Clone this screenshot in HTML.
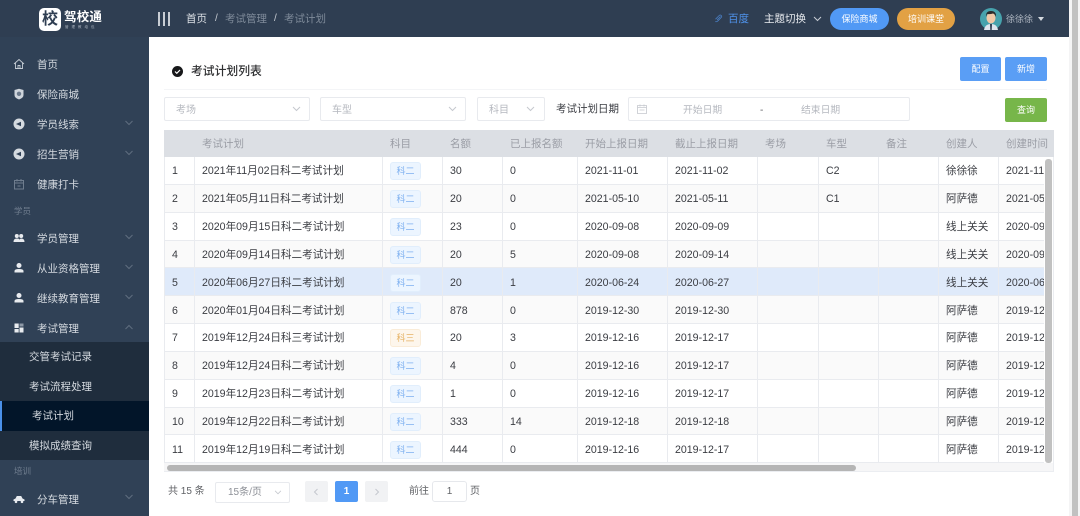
<!DOCTYPE html>
<html><head><meta charset="utf-8">
<style>
*{box-sizing:border-box;margin:0;padding:0}
html,body{width:1080px;height:516px;overflow:hidden;background:#fff;font-family:"Liberation Sans","Noto Sans CJK SC",sans-serif;font-size:10px;color:#303133}
.a{position:absolute;white-space:nowrap}
#top{position:absolute;left:0;top:0;width:1069px;height:37px;background:#2f3e52}
#side{position:absolute;left:0;top:37px;width:149px;height:479px;background:#304156}
.mi{position:absolute;left:37px;color:#d5dae0;font-size:10.5px;line-height:14px;white-space:nowrap;transform:translateY(-6px)}
.ic{position:absolute;left:13px;width:12px;height:12px;transform:translateY(-50%)}
.ch{position:absolute;left:125px;width:8px;height:5px;transform:translateY(-50%)}
.sub{position:absolute;left:0;width:149px;height:29.5px;background:#1f2d3d;color:#d5dae0;font-size:10.5px;line-height:31px;padding-left:29px}
.grp{position:absolute;left:14px;color:#6f7d8e;font-size:8.5px;line-height:12px;transform:translateY(-50%)}
.sel{position:absolute;top:97px;height:24px;border:1px solid #e8eaee;border-radius:2px;background:#fff}
.sel svg{position:absolute;top:8px}
.ph{position:absolute;top:104px;font-size:10px;line-height:13px;color:#b5b8bf;white-space:nowrap}
.btn{position:absolute;border-radius:2px;color:#fff;font-size:9px;text-align:center}
#tw{position:absolute;left:164px;top:130px;width:890px;height:342px;overflow:hidden;border-bottom:1px solid #ebedf1}
table{position:absolute;left:0;top:0;border-collapse:separate;border-spacing:0;table-layout:fixed;width:895px}
th{height:27px;background:#dcdfe4;color:#9a9da5;font-weight:normal;font-size:10.5px;line-height:14px;text-align:left;padding-left:7px;white-space:nowrap;overflow:hidden}
th:first-child{padding-left:8px}
td{height:27.85px;font-size:10.6px;line-height:14px;color:#3a3c42;padding:2px 0 0 7px;border-bottom:1px solid #e9ebef;border-right:1px solid #e9ebef;white-space:nowrap;overflow:hidden;background:#fff;vertical-align:middle}
td:first-child{border-left:1px solid #e9ebef}
tr.z td{background:#fafafa}
tr.h td{background:#dfeafa}
.t{display:block;width:31px;height:18px;line-height:16px;text-align:center;font-size:9px;border-radius:3px;background:#ecf5ff;border:1px solid #e1eefc;color:#7fb1f0}
.t.o{background:#fdf6ec;border-color:#faecd8;color:#e6b366}
#mask{position:absolute;left:1044px;top:157px;width:10px;height:315px;background:#fff}
</style></head><body>
<div id="top"></div>
<div id="side"></div>

<!-- logo -->
<div class="a" style="left:39px;top:8px;width:22px;height:23px;background:#fff;border-radius:5px;color:#2f3e52;font-size:16px;line-height:23px;text-align:center;font-weight:bold">校</div>
<div class="a" style="left:64px;top:10px;color:#fff;font-size:12.5px;line-height:15px;font-weight:bold;letter-spacing:.2px">驾校通</div>
<div class="a" style="left:65px;top:25px;color:#aab2bd;font-size:3.5px;line-height:5px;letter-spacing:3px">管理教培包</div>

<!-- header -->
<div class="a" style="left:158px;top:12px;width:1.5px;height:14px;background:#c8cdd4"></div>
<div class="a" style="left:163px;top:12px;width:1.5px;height:14px;background:#c8cdd4"></div>
<div class="a" style="left:168px;top:12px;width:1.5px;height:14px;background:#c8cdd4"></div>
<div class="a" style="left:186px;top:12px;color:#dde1e6;font-size:10.5px;line-height:14px">首页</div>
<div class="a" style="left:215px;top:12px;color:#c8cdd4;font-size:10px;line-height:14px">/</div>
<div class="a" style="left:225px;top:12px;color:#7f8b9a;font-size:10.5px;line-height:14px">考试管理</div>
<div class="a" style="left:274px;top:12px;color:#c8cdd4;font-size:10px;line-height:14px">/</div>
<div class="a" style="left:284px;top:12px;color:#7f8b9a;font-size:10.5px;line-height:14px">考试计划</div>
<svg class="a" style="left:714px;top:14px" width="9" height="9" viewBox="0 0 9 9" fill="none" stroke="#4a7fc4" stroke-width=".8"><path d="M3 6 6.5 2.5M1.5 5.2 5.2 1.5q1-1 2 0t0 2L4 6.8q-1.5 1.5-2.600.6"/></svg>
<div class="a" style="left:728px;top:12px;color:#4f92ea;font-size:10.5px;line-height:14px">百度</div>
<div class="a" style="left:764px;top:12px;color:#e8ebef;font-size:10.5px;line-height:14px">主题切换</div>
<svg class="a" style="left:813px;top:16px" width="9" height="6" viewBox="0 0 9 6" fill="none" stroke="#c8cdd4" stroke-width="1"><path d="M1 1l3.5 3.5L8 1"/></svg>
<div class="a" style="left:830px;top:8px;width:59px;height:22px;border-radius:11px;background:#5199f5;color:#fff;font-size:9px;line-height:22px;text-align:center">保险商城</div>
<div class="a" style="left:897px;top:8px;width:58px;height:22px;border-radius:11px;background:#e2a144;color:#fff;font-size:9px;line-height:22px;text-align:center">培训课堂</div>
<svg class="a" style="left:980px;top:8px" width="22" height="22" viewBox="0 0 22 22"><circle cx="11" cy="11" r="11" fill="#47a3ad"/><path d="M4 22q1-6 7-6t7 6z" fill="#dfe6ee"/><path d="M10 16h2l-.3 6h-1.4z" fill="#2f3e52"/><ellipse cx="11" cy="10" rx="4.5" ry="5.5" fill="#f1c9a8"/><path d="M6 9q-.5-6 5-6t5 6q-1-3-3-3.500-3 1-6 .5z" fill="#2b2b2b"/></svg>
<div class="a" style="left:1006px;top:13px;color:#aeb6c0;font-size:9px;line-height:12px">徐徐徐</div>
<div class="a" style="left:1038px;top:17px;width:0;height:0;border:3px solid transparent;border-top:4px solid #d5dae0;border-bottom:0"></div>

<!-- page scrollbar -->
<div class="a" style="left:1069px;top:0;width:11px;height:516px;background:#f4f4f5"></div>
<div class="a" style="left:1072px;top:0;width:6px;height:516px;background:#c1c1c1"></div>

<!-- sidebar -->
<svg class="ic" style="top:64px" viewBox="0 0 12 12" fill="none" stroke="#c5ccd4" stroke-width=".9"><path d="M1 6 6 1.5 11 6M2.5 5v5.5h7V5M5 10.5V7.5h2v3"/></svg>
<div class="mi" style="top:64px">首页</div>
<svg class="ic" style="top:94px" viewBox="0 0 12 12"><path d="M6 .8 10.5 2v5q0 3-4.500 4.500Q1.500 10 1.500 7V2z" fill="#cfd5dc"/><circle cx="6" cy="5.8" r="2.2" fill="#6c7a8c"/></svg>
<div class="mi" style="top:94px">保险商城</div>
<svg class="ic" style="top:124px" viewBox="0 0 12 12"><circle cx="6" cy="6" r="5.5" fill="#d5dae0"/><path d="M3 6l5-2.2v4.400z" fill="#304156"/></svg>
<div class="mi" style="top:124px">学员线索</div>
<svg class="ch" style="top:123px" viewBox="0 0 8 5" fill="none" stroke="#5f6d7f"><path d="M.5.5 4 4 7.5.5"/></svg>
<svg class="ic" style="top:154px" viewBox="0 0 12 12"><circle cx="6" cy="6" r="5.5" fill="#d5dae0"/><path d="M3 6l5-2.2v4.400z" fill="#304156"/></svg>
<div class="mi" style="top:154px">招生营销</div>
<svg class="ch" style="top:153px" viewBox="0 0 8 5" fill="none" stroke="#5f6d7f"><path d="M.5.5 4 4 7.5.5"/></svg>
<svg class="ic" style="top:184px" viewBox="0 0 12 12" fill="none" stroke="#6f7d8e" stroke-width="1"><path d="M1.5 2.5h9v8.500h-9zM1.5 5h9M4 1v2.500M8 1v2.500M4.500 8h3"/></svg>
<div class="mi" style="top:184px">健康打卡</div>
<div class="grp" style="top:211px">学员</div>
<svg class="ic" style="top:238px" viewBox="0 0 12 12" fill="#e8ebef"><circle cx="3.8" cy="4" r="2"/><circle cx="8.2" cy="4" r="2"/><path d="M.5 10q0-3.500 3.300-3.500T6 8q1-1.500 2.200-1.500 3.300 0 3.300 3.500z"/></svg>
<div class="mi" style="top:238px">学员管理</div>
<svg class="ch" style="top:237px" viewBox="0 0 8 5" fill="none" stroke="#5f6d7f"><path d="M.5.5 4 4 7.5.5"/></svg>
<svg class="ic" style="top:268px" viewBox="0 0 12 12" fill="#e8ebef"><circle cx="6" cy="3.5" r="2.5"/><path d="M1.5 10.5V9q0-2 4.500-2t4.500 2v1.500z"/></svg>
<div class="mi" style="top:268px">从业资格管理</div>
<svg class="ch" style="top:267px" viewBox="0 0 8 5" fill="none" stroke="#5f6d7f"><path d="M.5.5 4 4 7.5.5"/></svg>
<svg class="ic" style="top:298px" viewBox="0 0 12 12" fill="#e8ebef"><circle cx="6" cy="3.5" r="2.5"/><path d="M1.5 10.5V9q0-2 4.500-2t4.500 2v1.500z"/></svg>
<div class="mi" style="top:298px">继续教育管理</div>
<svg class="ch" style="top:297px" viewBox="0 0 8 5" fill="none" stroke="#5f6d7f"><path d="M.5.5 4 4 7.5.5"/></svg>
<svg class="ic" style="top:328px" viewBox="0 0 12 12" fill="#e8ebef"><path d="M1.5 1.5h4.200v4.500H1.5zM1.5 7h4.200v3.500H1.5zM6.500 5.500h4v5h-4z"/><path d="M6.500 1.500h4v3h-4z" fill="#8d98a6"/></svg>
<div class="mi" style="top:328px">考试管理</div>
<svg class="ch" style="top:327px" viewBox="0 0 8 5" fill="none" stroke="#5f6d7f"><path d="M.5 4.500 4 1l3.500 3.500"/></svg>
<div class="sub" style="top:342px;height:30px">交管考试记录</div>
<div class="sub" style="top:372px">考试流程处理</div>
<div class="sub" style="top:401px;background:#021529;padding-left:32px;color:#d5dae0"><span class="a" style="left:0;top:0;width:2px;height:29.5px;background:#4a90e9"></span>考试计划</div>
<div class="sub" style="top:430.5px">模拟成绩查询</div>
<div class="grp" style="top:471px">培训</div>
<svg class="ic" style="top:499px" viewBox="0 0 12 12" fill="#e8ebef"><path d="M.5 8V6.500L2.500 5.500 3.800 3h4.400L9.500 5.500l2 1V8H.5z"/><circle cx="3" cy="8.8" r="1.3"/><circle cx="9" cy="8.8" r="1.3"/></svg>
<div class="mi" style="top:499px">分车管理</div>
<svg class="ch" style="top:497px" viewBox="0 0 8 5" fill="none" stroke="#5f6d7f"><path d="M.5.5 4 4 7.5.5"/></svg>

<!-- title -->
<svg class="a" style="left:172px;top:66px" width="11" height="11" viewBox="0 0 11 11"><circle cx="5.5" cy="5.5" r="5.5" fill="#17181a"/><path d="M3 5.5l1.8 1.8L8 4" fill="none" stroke="#fff" stroke-width="1.2"/></svg>
<div class="a" style="left:191px;top:63px;font-size:11.8px;line-height:16px;color:#303133;font-weight:500">考试计划列表</div>
<div class="btn" style="left:960px;top:57px;width:41px;height:24px;line-height:24px;background:#5a9ef5">配置</div>
<div class="btn" style="left:1005px;top:57px;width:42px;height:24px;line-height:24px;background:#5a9ef5">新增</div>
<div class="a" style="left:164px;top:89px;width:883px;height:1px;background:#f4f5f7"></div>

<!-- filters -->
<div class="sel" style="left:164px;width:146px"><svg style="left:127px" width="9" height="6" viewBox="0 0 9 6" fill="none" stroke="#c5c8ce"><path d="M1 1l3.5 3.5L8 1"/></svg></div>
<div class="ph" style="left:176px">考场</div>
<div class="sel" style="left:320px;width:146px"><svg style="left:127px" width="9" height="6" viewBox="0 0 9 6" fill="none" stroke="#c5c8ce"><path d="M1 1l3.5 3.5L8 1"/></svg></div>
<div class="ph" style="left:332px">车型</div>
<div class="sel" style="left:477px;width:68px"><svg style="left:48px" width="9" height="6" viewBox="0 0 9 6" fill="none" stroke="#c5c8ce"><path d="M1 1l3.5 3.5L8 1"/></svg></div>
<div class="ph" style="left:489px">科目</div>
<div class="a" style="left:556px;top:102px;font-size:10.5px;line-height:14px;color:#3a3c42">考试计划日期</div>
<div class="sel" style="left:628px;width:282px"></div>
<svg class="a" style="left:637px;top:104px" width="10" height="10" viewBox="0 0 10 10" fill="none" stroke="#c5c8ce" stroke-width=".8"><path d="M.5 1.5h9v8h-9zM.5 3.5h9M3 .5v2M7 .5v2M2.5 6h5"/></svg>
<div class="ph" style="left:683px;font-size:9.8px">开始日期</div>
<div class="ph" style="left:760px;color:#606266">-</div>
<div class="ph" style="left:801px;font-size:9.8px">结束日期</div>
<div class="btn" style="left:1005px;top:98px;width:42px;height:24px;line-height:24px;background:#77b64a">查询</div>

<!-- table -->
<div id="tw">
<table>
<colgroup><col style="width:31px"><col style="width:188px"><col style="width:60px"><col style="width:60px"><col style="width:75px"><col style="width:90px"><col style="width:90px"><col style="width:61px"><col style="width:60px"><col style="width:60px"><col style="width:60px"><col style="width:60px"></colgroup>
<thead><tr><th></th><th>考试计划</th><th>科目</th><th>名额</th><th>已上报名额</th><th>开始上报日期</th><th>截止上报日期</th><th>考场</th><th>车型</th><th>备注</th><th>创建人</th><th>创建时间</th></tr></thead>
<tbody>
<tr><td>1</td><td>2021年11月02日科二考试计划</td><td><span class="t">科二</span></td><td>30</td><td>0</td><td>2021-11-01</td><td>2021-11-02</td><td></td><td>C2</td><td></td><td>徐徐徐</td><td>2021-11-01</td></tr>
<tr class="z"><td>2</td><td>2021年05月11日科二考试计划</td><td><span class="t">科二</span></td><td>20</td><td>0</td><td>2021-05-10</td><td>2021-05-11</td><td></td><td>C1</td><td></td><td>阿萨德</td><td>2021-05-10</td></tr>
<tr><td>3</td><td>2020年09月15日科二考试计划</td><td><span class="t">科二</span></td><td>23</td><td>0</td><td>2020-09-08</td><td>2020-09-09</td><td></td><td></td><td></td><td>线上关关</td><td>2020-09-08</td></tr>
<tr class="z"><td>4</td><td>2020年09月14日科二考试计划</td><td><span class="t">科二</span></td><td>20</td><td>5</td><td>2020-09-08</td><td>2020-09-14</td><td></td><td></td><td></td><td>线上关关</td><td>2020-09-08</td></tr>
<tr class="h"><td>5</td><td>2020年06月27日科二考试计划</td><td><span class="t">科二</span></td><td>20</td><td>1</td><td>2020-06-24</td><td>2020-06-27</td><td></td><td></td><td></td><td>线上关关</td><td>2020-06-24</td></tr>
<tr class="z"><td>6</td><td>2020年01月04日科二考试计划</td><td><span class="t">科二</span></td><td>878</td><td>0</td><td>2019-12-30</td><td>2019-12-30</td><td></td><td></td><td></td><td>阿萨德</td><td>2019-12-30</td></tr>
<tr><td>7</td><td>2019年12月24日科三考试计划</td><td><span class="t o">科三</span></td><td>20</td><td>3</td><td>2019-12-16</td><td>2019-12-17</td><td></td><td></td><td></td><td>阿萨德</td><td>2019-12-16</td></tr>
<tr class="z"><td>8</td><td>2019年12月24日科二考试计划</td><td><span class="t">科二</span></td><td>4</td><td>0</td><td>2019-12-16</td><td>2019-12-17</td><td></td><td></td><td></td><td>阿萨德</td><td>2019-12-16</td></tr>
<tr><td>9</td><td>2019年12月23日科二考试计划</td><td><span class="t">科二</span></td><td>1</td><td>0</td><td>2019-12-16</td><td>2019-12-17</td><td></td><td></td><td></td><td>阿萨德</td><td>2019-12-16</td></tr>
<tr class="z"><td>10</td><td>2019年12月22日科二考试计划</td><td><span class="t">科二</span></td><td>333</td><td>14</td><td>2019-12-18</td><td>2019-12-18</td><td></td><td></td><td></td><td>阿萨德</td><td>2019-12-18</td></tr>
<tr><td>11</td><td>2019年12月19日科二考试计划</td><td><span class="t">科二</span></td><td>444</td><td>0</td><td>2019-12-16</td><td>2019-12-17</td><td></td><td></td><td></td><td>阿萨德</td><td>2019-12-16</td></tr>
</tbody></table>
</div>
<div id="mask" style="border-right:1px solid #ebedf1;border-bottom:1px solid #ebedf1"></div>
<div class="a" style="left:1045px;top:159px;width:7px;height:304px;background:#c1c1c1;border-radius:3px"></div>
<div class="a" style="left:164px;top:463px;width:889px;height:8px;background:#f6f6f7"></div>
<div class="a" style="left:167px;top:465px;width:689px;height:5.5px;background:#b5b5b5;border-radius:3px"></div>

<!-- pagination -->
<div class="a" style="left:168px;top:485px;font-size:10px;line-height:14px;color:#606266">共 15 条</div>
<div class="sel" style="left:215px;top:482px;width:75px;height:21px"><svg style="left:58px;top:7px" width="8" height="5" viewBox="0 0 9 6" fill="none" stroke="#c5c8ce"><path d="M1 1l3.5 3.5L8 1"/></svg></div>
<div class="a" style="left:228px;top:486px;font-size:10px;line-height:13px;color:#8c8f96">15条/页</div>
<div class="a" style="left:305px;top:481px;width:23px;height:21px;background:#f1f2f4;border-radius:2px"></div>
<svg class="a" style="left:313px;top:488px" width="6" height="8" viewBox="0 0 6 8" fill="none" stroke="#c5c8ce"><path d="M4.5 1 1.5 4l3 3"/></svg>
<div class="a" style="left:335px;top:481px;width:23px;height:21px;background:#5199f5;border-radius:2px;color:#fff;font-size:10px;font-weight:bold;line-height:21px;text-align:center">1</div>
<div class="a" style="left:365px;top:481px;width:23px;height:21px;background:#f1f2f4;border-radius:2px"></div>
<svg class="a" style="left:374px;top:488px" width="6" height="8" viewBox="0 0 6 8" fill="none" stroke="#c5c8ce"><path d="M1.5 1l3 3-3 3"/></svg>
<div class="a" style="left:409px;top:485px;font-size:10px;line-height:14px;color:#606266">前往</div>
<div class="a" style="left:432px;top:481px;width:35px;height:21px;border:1px solid #e6e8ec;border-radius:3px;font-size:10px;line-height:19px;text-align:center;color:#606266">1</div>
<div class="a" style="left:470px;top:485px;font-size:10px;line-height:14px;color:#606266">页</div>
</body></html>
